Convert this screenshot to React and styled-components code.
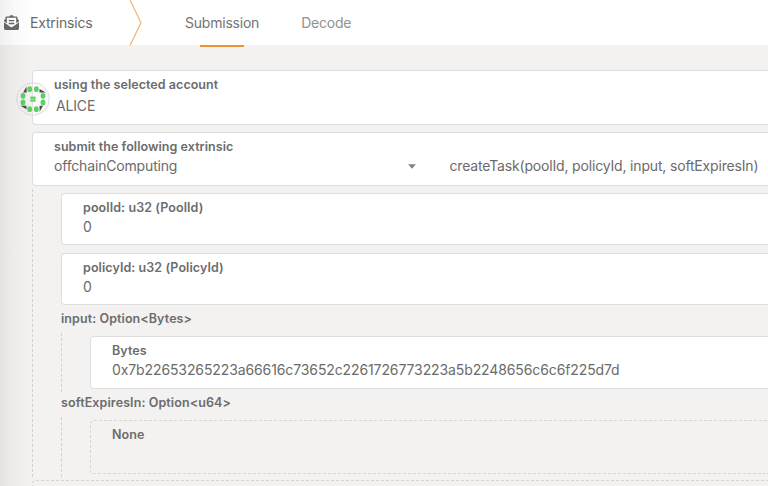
import React from "react";
import styled, { createGlobalStyle } from "styled-components";
import { FaEnvelopeOpenText } from "react-icons/fa";

const GlobalStyle = createGlobalStyle`
  * { box-sizing: border-box; }
  body { margin: 0; background: #f3f2f1; overflow: hidden; }
`;

const Page = styled.div`
  position: relative;
  width: 768px;
  height: 486px;
  overflow: hidden;
  background: #f3f2f1;
  color: #4e4e4e;
  font-family: Inter, "Liberation Sans", sans-serif;
  font-size: 14px;
`;

const SideShadow = styled.div`
  position: absolute;
  inset: 0 auto 0 0;
  width: 32px;
  pointer-events: none;
  background: linear-gradient(to right, rgba(0, 0, 0, 0.06), rgba(0, 0, 0, 0.022) 45%, rgba(0, 0, 0, 0));
`;

const TabBar = styled.header`
  display: flex;
  height: 45px;
  background: #fff;
`;

const Section = styled.div`
  display: flex;
  align-items: center;
  gap: 11px;
  width: 129px;
  padding-left: 4px;
  color: #6a6a6a;
  letter-spacing: -0.18px;
`;

const Chevron = styled.svg`
  display: block;
  flex: none;
  width: 14px;
  height: 46px;
`;

const Tab = styled.a`
  display: flex;
  flex-direction: column;
  align-items: center;
  height: 47px;
  margin-left: 42px;
  padding-top: 12.5px;
  line-height: 20px;
  color: ${(p) => (p.$active ? "#747474" : "#929292")};
  letter-spacing: -0.22px;

  &::after {
    content: "";
    width: 44px;
    height: 2px;
    margin-top: auto;
    background: ${(p) => (p.$active ? "#f19135" : "transparent")};
  }
`;

const Form = styled.main`
  padding: 25px 0 0 32px;
`;

const Field = styled.section`
  position: relative;
  height: ${(p) => p.$height || 53}px;
  margin-top: ${(p) => p.$gap || 0}px;
  padding: 5px 0 0 21px;
  border: 1px ${(p) => (p.$empty ? "dashed #d6d6d4" : "solid #dededf")};
  border-right: 0;
  border-radius: 4px 0 0 4px;
  background: ${(p) => (p.$empty ? "transparent" : "#fff")};
`;

const Label = styled.div`
  font-size: 12.5px;
  font-weight: 600;
  line-height: 18px;
  color: #6c6c6c;
  white-space: nowrap;
  letter-spacing: ${(p) => p.$track ?? 0.05}px;
`;

const Value = styled.div`
  padding-top: ${(p) => p.$drop || 0}px;
  padding-left: ${(p) => p.$indent || 0}px;
  line-height: 19px;
  color: #6b6b6b;
  white-space: nowrap;
  letter-spacing: ${(p) => p.$track ?? -0.17}px;
`;

const CallRow = styled.div`
  display: grid;
  grid-template-columns: 354px 41.5px 1fr;
  align-items: center;
`;

const Caret = styled.svg`
  width: 8px;
  height: 5px;
  margin-top: 2px;
`;

const Params = styled.div`
  display: flow-root;
  margin-top: ${(p) => p.$gap}px;
  padding-left: 28px;
  height: ${(p) => p.$height}px;
  border-left: 1px dashed #d0d0ce;
`;

const ParamTitle = styled(Label)`
  height: 18px;
  margin-top: ${(p) => p.$gap}px;
`;

const NextGroup = styled.div`
  height: 30px;
  margin-top: 3px;
  border: 1px dashed #d4d4d2;
  border-right: 0;
  border-radius: 4px 0 0 0;
`;

const Avatar = styled.svg`
  position: absolute;
  left: -17px;
  top: 10.5px;
  width: 34px;
  height: 34px;
`;

const DOTS = [
  [13.7, 7.2], [20.3, 7.2], [27, 13.8], [27, 20.5],
  [20.3, 27.2], [13.7, 27.2], [7, 20.5], [7, 13.8],
];

function Identicon() {
  return (
    <Avatar viewBox="0 0 34 34">
      <circle cx="17" cy="17" r="16.3" fill="#eeeeee" fillOpacity=".3" stroke="#dcdcdc" />
      <g fill="#4b4848">
        <path d="M10.5 4.5 10.7 10.6H7.2Z" />
        <path d="M23.5 7 29.8 10.6H23.5Z" />
        <path d="M23.5 23.7H27L23.7 29.8Z" />
        <path d="M4.5 23.7H10.5V27.3Z" />
      </g>
      <g fill="#5fce64">
        {DOTS.map(([x, y]) => (
          <ellipse key={`${x}-${y}`} cx={x} cy={y} rx="2.4" ry="2.9" />
        ))}
        <rect x="14.4" y="14.5" width="2.5" height="2.5" rx=".6" />
        <rect x="17.1" y="14.5" width="2.5" height="2.5" rx=".6" />
        <rect x="14.4" y="17.3" width="2.5" height="2.5" rx=".6" />
        <rect x="17.1" y="17.3" width="2.5" height="2.5" rx=".6" />
      </g>
    </Avatar>
  );
}

export default function App() {
  return (
    <Page>
      <GlobalStyle />
      <TabBar>
        <Section>
          <FaEnvelopeOpenText size={15} />
          <span>Extrinsics</span>
        </Section>
        <Chevron viewBox="0 0 14 46" fill="none" stroke="#f3ac68" strokeWidth="1.1">
          <path d="M1 0 12 22.7 1 45.5" />
        </Chevron>
        <Tab $active>Submission</Tab>
        <Tab>Decode</Tab>
      </TabBar>
      <Form>
        <Field $height={55}>
          <Label>using the selected account</Label>
          <Value $indent={2} $drop={2}>ALICE</Value>
          <Identicon />
        </Field>
        <Field $height={54} $gap={7}>
          <Label>submit the following extrinsic</Label>
          <CallRow>
            <Value>offchainComputing</Value>
            <Caret viewBox="0 0 8 5"><path d="M.1.3H7.9L4 4.7Z" fill="#828282" /></Caret>
            <Value>createTask(poolId, policyId, input, softExpiresIn)</Value>
          </CallRow>
        </Field>
        <Params $gap={3} $height={288}>
          <Field $height={52} $gap={4}>
            <Label $track={0.09}>poolId: u32 (PoolId)</Label>
            <Value>0</Value>
          </Field>
          <Field $height={52} $gap={8}>
            <Label $track={0.08}>policyId: u32 (PolicyId)</Label>
            <Value>0</Value>
          </Field>
          <ParamTitle $gap={5} $track={0.08}>input: Option&lt;Bytes&gt;</ParamTitle>
          <Params $gap={5} $height={59}>
            <Field $gap={3}>
              <Label>Bytes</Label>
              <Value $track={-0.11}>0x7b22653265223a66616c73652c2261726773223a5b2248656c6c6f225d7d</Value>
            </Field>
          </Params>
          <ParamTitle $gap={2} $track={0.1}>softExpiresIn: Option&lt;u64&gt;</ParamTitle>
          <Params $gap={5} $height={60}>
            <Field $height={54} $gap={3} $empty>
              <Label>None</Label>
            </Field>
          </Params>
        </Params>
        <NextGroup />
      </Form>
      <SideShadow />
    </Page>
  );
}
